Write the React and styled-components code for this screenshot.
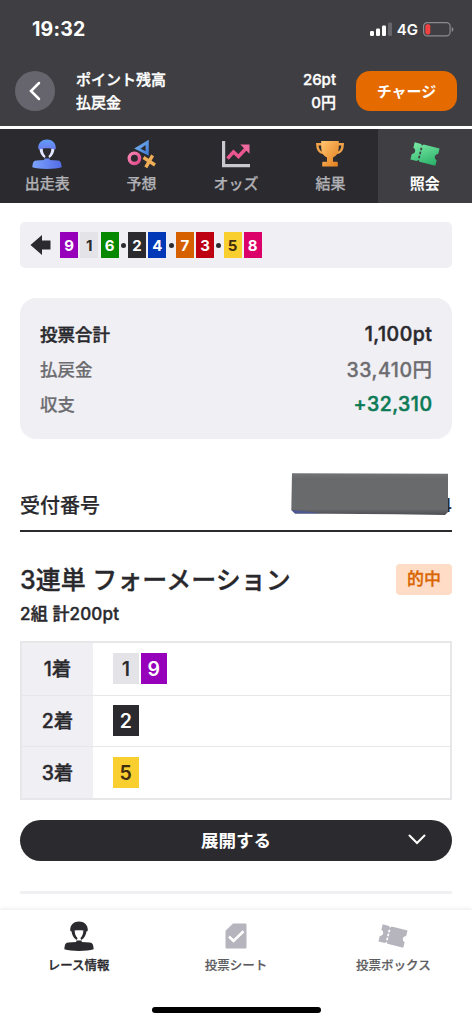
import React from "react";
import styled, { createGlobalStyle } from "styled-components";

const colors = {
  black: "#2b2b2f",
  header: "#3f3f43",
  gray: "#f0eff4",
  border: "#e7e7ea",
  text: "#29292d",
  subText: "#6c6c70",
  orange: "#e56a00",
  green: "#0b7a55",
};

const carColors = {
  1: { bg: "#e4e4e8", fg: "#2b2b2f" },
  2: { bg: "#2b2b2f", fg: "#ffffff" },
  3: { bg: "#bd0012", fg: "#ffffff" },
  4: { bg: "#0038b8", fg: "#ffffff" },
  5: { bg: "#f9cf2f", fg: "#3f2d10" },
  6: { bg: "#068800", fg: "#ffffff" },
  7: { bg: "#d66000", fg: "#ffffff" },
  8: { bg: "#dc0069", fg: "#ffffff" },
  9: { bg: "#9700bb", fg: "#ffffff" },
};

const lineup = [9, 1, 6, "dot", 2, 4, "dot", 7, 3, "dot", 5, 8];

const bets = [
  { label: "1着", cars: [1, 9] },
  { label: "2着", cars: [2] },
  { label: "3着", cars: [5] },
];

const Rider = ({ fill }) => (
  <svg width="30" height="30" viewBox="0 0 30 30">
    <defs>
      <linearGradient id="riderBlue" x1="0" y1="0" x2="0" y2="1">
        <stop offset="0" stopColor="#5f9cf5" />
        <stop offset="1" stopColor="#6c7df0" />
      </linearGradient>
      <linearGradient id="riderBody" x1="0" y1="0" x2="1" y2="0">
        <stop offset="0" stopColor="#7ba4ff" />
        <stop offset="1" stopColor="#536be5" />
      </linearGradient>
    </defs>
    <path
      d="M7.500 9.500h3.200c0 3.200.9 5.700 2.900 7.700l-1 1.800C9.400 17 7.700 13.600 7.500 9.500ZM22.500 9.500h-3.200c0 3.200-.9 5.700-2.900 7.700l1 1.800c3.200-2 4.900-5.400 5.100-9.500Z"
      fill={fill || "#e3e7ff"}
    />
    <path
      d="M6.200 8.800C6.200 3.600 10 .5 15 .5s8.800 3.100 8.800 8.300c0 1.200-.5 1.700-1.200 1.700-2.200-.9-4.600-1.200-7.600-1.200s-5.400.3-7.600 1.200c-.7 0-1.200-.5-1.200-1.700Z"
      fill={fill || "url(#riderBlue)"}
    />
    <path
      d="M12.300 19.400h5.400v1.500l7.800.7c2.300.2 3.500 1.400 3.800 3.600l.4 3c-3.700 1.200-8.700 1.700-14.700 1.700S4 29.400.3 28.200l.4-3c.3-2.200 1.500-3.400 3.800-3.600l7.800-.7Z"
      fill={fill || "url(#riderBody)"}
    />
  </svg>
);

const Forecast = () => (
  <svg width="30" height="30" viewBox="0 0 30 30">
    <defs>
      <linearGradient id="fcRing" x1="0" y1="0" x2="1" y2="1">
        <stop offset="0" stopColor="#f788b5" />
        <stop offset="1" stopColor="#e4478a" />
      </linearGradient>
      <linearGradient id="fcTri" x1="0" y1="0" x2="1" y2="1">
        <stop offset="0" stopColor="#83bdf8" />
        <stop offset="1" stopColor="#3a75d0" />
      </linearGradient>
    </defs>
    <path
      d="M21.800.8v16L7.200 9.600ZM18.600 6l-5 3.800 5 2.500Z"
      fill="url(#fcTri)"
      fillRule="evenodd"
    />
    <circle cx="7.400" cy="19.300" r="5.200" fill="none" stroke="url(#fcRing)" strokeWidth="3.400" />
    <path d="m16.500 18.500 11.500 7.500M25.600 16.300l-6.800 12" fill="none" stroke="#f0ae57" strokeWidth="3.400" />
  </svg>
);

const Odds = () => (
  <svg width="30" height="30" viewBox="0 0 30 30">
    <path d="M2.600 2v24.700H29" fill="none" stroke="#c9c9cf" strokeWidth="3.200" />
    <path
      d="m6.500 19.500 6-6.500 5 4.500 7.500-8"
      fill="none"
      stroke="#ea568f"
      strokeWidth="3.400"
    />
    <path d="M19.300 5.500h9.200v9.200Z" fill="#ee6a9f" />
  </svg>
);

const Trophy = () => (
  <svg width="30" height="30" viewBox="0 0 30 30">
    <defs>
      <linearGradient id="cup" x1="0" y1="0" x2="1" y2="1">
        <stop offset="0" stopColor="#ffc670" />
        <stop offset="1" stopColor="#e37c1c" />
      </linearGradient>
    </defs>
    <path
      d="M7 5.200H2.300c0 5.300 2.200 8.300 6.200 8.800M23 5.200h4.700c0 5.300-2.200 8.300-6.200 8.800"
      fill="none"
      stroke="#f3a349"
      strokeWidth="2.400"
    />
    <path
      d="M6.200 2h17.600v5.500c0 6-2.300 9.500-5.800 11v4.200h3.600c.7 0 1.200.5 1.200 1.200v3.600H7.200v-3.600c0-.7.5-1.200 1.200-1.200H12v-4.200c-3.500-1.500-5.800-5-5.800-11Z"
      fill="url(#cup)"
    />
  </svg>
);

const Ticket = ({ fill, slit }) => (
  <svg width="30" height="30" viewBox="0 0 30 30">
    <defs>
      <linearGradient id="ticketGreen" x1="0" y1="0" x2="1" y2="1">
        <stop offset="0" stopColor="#7ceba5" />
        <stop offset="1" stopColor="#27ae68" />
      </linearGradient>
    </defs>
    <g transform="rotate(14 15 15)">
      <path
        d="M2.200 6.200h6.600l1.300 1.600 1.300-1.600h16.400v5.600c-1.700.5-2.600 1.700-2.600 3.200s.9 2.700 2.600 3.200v5.600H11.400l-1.300-1.600-1.300 1.600H2.200v-5.600c1.700-.5 2.600-1.700 2.600-3.200s-.9-2.700-2.600-3.200Z"
        fill={fill || "url(#ticketGreen)"}
      />
      <path d="M10.100 9.700v10.900" stroke={slit} strokeWidth="1.700" strokeDasharray="2.700 1.400" />
    </g>
  </svg>
);

const Sheet = () => (
  <svg width="30" height="30" viewBox="0 0 30 30">
    <path
      d="M12 2.500h12.500c.6 0 1 .4 1 1v23c0 .6-.4 1-1 1h-19c-.6 0-1-.4-1-1V9.800Z"
      fill="#b6b5be"
    />
    <path d="m8 15.500 4.500 4.500 10-9.800" fill="none" stroke="#fff" strokeWidth="2.600" />
  </svg>
);

const tabs = [
  { label: "出走表", icon: <Rider /> },
  { label: "予想", icon: <Forecast /> },
  { label: "オッズ", icon: <Odds /> },
  { label: "結果", icon: <Trophy /> },
  { label: "照会", icon: <Ticket slit={colors.header} />, active: true },
];

const navs = [
  { label: "レース情報", icon: <Rider fill={colors.black} />, active: true },
  { label: "投票シート", icon: <Sheet /> },
  { label: "投票ボックス", icon: <Ticket fill="#b6b5be" slit="#fff" /> },
];

const Car = ({ number, large }) => (
  <StyledCar $large={large} $bg={carColors[number].bg} $fg={carColors[number].fg}>
    {number}
  </StyledCar>
);

const Header = () => (
  <StyledHeader>
    <StyledStatus>
      <StyledTime>19:32</StyledTime>
      <StyledSignals>
        <svg width="22" height="14" viewBox="0 0 22 14">
          <rect x="0" y="9" width="4" height="5" rx="1.200" fill="#fff" />
          <rect x="6" y="6.500" width="4" height="7.500" rx="1.200" fill="#fff" />
          <rect x="12" y="3.500" width="4" height="10.500" rx="1.200" fill="#fff" />
          <rect x="18" y="0.500" width="4" height="13.500" rx="1.200" fill="#67676b" />
        </svg>
        <span>4G</span>
        <svg width="31" height="15" viewBox="0 0 31 15">
          <rect x=".6" y=".6" width="26.500" height="13.300" rx="3.600" fill="none" stroke="#8b8b8f" strokeWidth="1.200" />
          <rect x="2.300" y="2.200" width="5" height="10.200" rx="1.800" fill="#f04040" />
          <path d="M28.700 5v4.800c1-.4 1.700-1.300 1.700-2.400S29.700 5.400 28.700 5Z" fill="#8b8b8f" />
        </svg>
      </StyledSignals>
    </StyledStatus>
    <StyledAccount>
      <StyledBack>
        <svg width="12" height="20" viewBox="0 0 12 20">
          <path d="m10 2-8 8 8 8" fill="none" stroke="#fff" strokeWidth="2.500" strokeLinecap="round" />
        </svg>
      </StyledBack>
      <StyledBalance>
        <div>
          <span>ポイント残高</span>
          <span>26pt</span>
        </div>
        <div>
          <span>払戻金</span>
          <span>0円</span>
        </div>
      </StyledBalance>
      <StyledCharge>チャージ</StyledCharge>
    </StyledAccount>
  </StyledHeader>
);

const App = () => {
  return (
    <StyledRoot>
      <GlobalStyle />
      <Header />
      <StyledTabs>
        {tabs.map((tab) => (
          <StyledTab key={tab.label} $active={tab.active}>
            {tab.icon}
            <span>{tab.label}</span>
          </StyledTab>
        ))}
      </StyledTabs>
      <StyledContents>
        <StyledLineup>
          <svg width="21" height="20" viewBox="0 0 21 20">
            <path d="M.5 10 12 0v5.500h8.500v9H12V20Z" fill={colors.black} />
          </svg>
          <StyledCars>
            {lineup.map((item, i) =>
              item === "dot" ? <StyledDot key={i} /> : <Car key={i} number={item} />
            )}
          </StyledCars>
        </StyledLineup>
        <StyledSummary>
          <StyledTotal $color={colors.text} $bold>
            <span>投票合計</span>
            <span>1,100pt</span>
          </StyledTotal>
          <StyledTotal>
            <span>払戻金</span>
            <span>33,410円</span>
          </StyledTotal>
          <StyledTotal $amount={colors.green}>
            <span>収支</span>
            <span>+32,310</span>
          </StyledTotal>
        </StyledSummary>
        <StyledReceipt>
          <span>受付番号</span>
          <StyledReceiptNumber>
            4
            <StyledMask width="158" height="43" viewBox="0 0 158 43">
              <defs>
                <linearGradient id="mask" x1="0" y1="0" x2="0" y2="1">
                  <stop offset="0" stopColor="#727375" />
                  <stop offset=".15" stopColor="#68696b" />
                  <stop offset=".85" stopColor="#6a6b6d" />
                  <stop offset="1" stopColor="#4d4e54" />
                </linearGradient>
              </defs>
              <path d="M1 .3 157 .8V39l-3 3-48-.8L4 40.500.300 37Z" fill="url(#mask)" />
              <path d="m.5 37 16 1.500 14 1.800-26.500.2Z" fill="#4c5793" />
            </StyledMask>
          </StyledReceiptNumber>
        </StyledReceipt>
        <StyledBetHead>
          <h1>3連単 フォーメーション</h1>
          <StyledHit>的中</StyledHit>
        </StyledBetHead>
        <StyledBetInfo>2組 計200pt</StyledBetInfo>
        <StyledTable>
          {bets.map((bet) => (
            <StyledRow key={bet.label}>
              <StyledPlace>{bet.label}</StyledPlace>
              <StyledPicks>
                {bet.cars.map((number) => (
                  <Car key={number} number={number} large />
                ))}
              </StyledPicks>
            </StyledRow>
          ))}
        </StyledTable>
        <StyledExpand>
          <span>展開する</span>
          <svg width="18" height="11" viewBox="0 0 18 11">
            <path d="m1.500 1.500 7.500 7.500 7.500-7.500" fill="none" stroke="#fff" strokeWidth="2" strokeLinecap="round" />
          </svg>
        </StyledExpand>
        <StyledDivider />
      </StyledContents>
      <StyledNav>
        <StyledNavList>
          {navs.map((nav) => (
            <StyledNavItem key={nav.label} $active={nav.active}>
              {nav.icon}
              <span>{nav.label}</span>
            </StyledNavItem>
          ))}
        </StyledNavList>
        <StyledHomeBar />
      </StyledNav>
    </StyledRoot>
  );
};

export default App;

const GlobalStyle = createGlobalStyle`
  * {
    box-sizing: border-box;
  }
  body {
    margin: 0;
    background-color: #fff;
    font-family: Inter, "Noto Sans CJK JP", sans-serif;
    color: ${colors.text};
  }
  svg {
    display: block;
    flex-shrink: 0;
  }
  button {
    border: 0;
    padding: 0;
    font-family: inherit;
  }
`;

const StyledRoot = styled.div`
  width: 472px;
  height: 1024px;
  display: flex;
  flex-direction: column;
  overflow: hidden;
  white-space: nowrap;
`;

const StyledHeader = styled.header`
  height: 129px;
  flex-shrink: 0;
  background-color: ${colors.header};
  border-bottom: 3px solid #fff;
  color: #fff;
`;

const StyledStatus = styled.div`
  height: 58px;
  padding: 0 18px 0 32px;
  display: flex;
  align-items: center;
  justify-content: space-between;
`;

const StyledTime = styled.span`
  font-size: 19.500px;
  font-weight: 700;
  letter-spacing: 0.2px;
`;

const StyledSignals = styled.div`
  display: flex;
  align-items: center;
  gap: 5px;
  font-size: 15px;
  font-weight: 600;
`;

const StyledAccount = styled.div`
  height: 66px;
  padding: 0 15px;
  display: flex;
  align-items: center;
`;

const StyledBack = styled.button`
  width: 40px;
  height: 40px;
  padding-right: 1px;
  display: flex;
  align-items: center;
  justify-content: center;
  border-radius: 50%;
  background-color: #66656e;
`;

const StyledBalance = styled.div`
  flex: 1;
  margin: 0 20px 0 21px;
  font-size: 15px;
  font-weight: 500;
  -webkit-text-stroke: 0.35px;
  & > div {
    height: 23px;
    line-height: 23px;
    display: flex;
    justify-content: space-between;
  }
`;

const StyledCharge = styled.button`
  width: 101px;
  height: 40px;
  padding-bottom: 1px;
  border-radius: 14px;
  background-color: ${colors.orange};
  color: #fff;
  font-size: 15px;
  font-weight: 700;
`;

const StyledTabs = styled.nav`
  height: 74px;
  flex-shrink: 0;
  display: grid;
  grid-template-columns: repeat(5, 1fr);
  background-color: ${colors.black};
`;

const StyledTab = styled.div`
  padding-top: 10px;
  display: flex;
  flex-direction: column;
  align-items: center;
  background-color: ${({ $active }) => ($active ? colors.header : "transparent")};
  color: ${({ $active }) => ($active ? "#fff" : "#b0b0b5")};
  font-size: 15px;
  font-weight: ${({ $active }) => ($active ? 700 : 500)};
  -webkit-text-stroke: ${({ $active }) => ($active ? 0 : "0.25px")};
  & > span {
    margin-top: 4px;
    line-height: 22px;
  }
`;

const StyledContents = styled.main`
  flex: 1;
  padding: 19px 20px 0;
`;

const StyledLineup = styled.div`
  height: 46px;
  padding-left: 10px;
  display: flex;
  align-items: center;
  gap: 9px;
  border-radius: 5px;
  background-color: ${colors.gray};
`;

const StyledCars = styled.div`
  display: flex;
  align-items: center;
  gap: 2.250px;
`;

const StyledCar = styled.span`
  width: ${({ $large }) => ($large ? 25.5 : 18)}px;
  height: ${({ $large }) => ($large ? 31 : 26)}px;
  display: flex;
  align-items: center;
  justify-content: center;
  background-color: ${({ $bg }) => $bg};
  color: ${({ $fg }) => $fg};
  font-size: ${({ $large }) => ($large ? 19.5 : 15)}px;
  font-weight: ${({ $large }) => ($large ? 600 : 700)};
`;

const StyledDot = styled.i`
  width: 5px;
  height: 5px;
  border-radius: 50%;
  background-color: ${colors.black};
`;

const StyledSummary = styled.section`
  height: 141px;
  margin-top: 30px;
  padding: 18px 20px;
  border-radius: 16px;
  background-color: ${colors.gray};
`;

const StyledTotal = styled.div`
  height: 35px;
  display: flex;
  align-items: center;
  justify-content: space-between;
  color: ${({ $color }) => $color || colors.subText};
  font-size: 17.500px;
  font-weight: 500;
  -webkit-text-stroke: ${({ $bold }) => ($bold ? "0.4px" : "0.2px")};
  & > span:nth-child(2) {
    margin-right: -0.5px;
    color: ${({ $amount }) => $amount};
    font-size: 19.500px;
    letter-spacing: 0.5px;
    -webkit-text-stroke: ${({ $bold, $amount }) => ($bold || $amount ? "0.5px" : "0.3px")};
  }
`;

const StyledReceipt = styled.div`
  height: 93px;
  padding-top: 52px;
  display: flex;
  justify-content: space-between;
  border-bottom: 2px solid ${colors.black};
  font-size: 20px;
  font-weight: 500;
  line-height: 30px;
  -webkit-text-stroke: 0.2px;
`;

const StyledReceiptNumber = styled.span`
  position: relative;
  font-size: 18px;
`;

const StyledMask = styled.svg`
  position: absolute;
  right: 3px;
  top: -18px;
`;

const StyledBetHead = styled.div`
  height: 64px;
  padding-top: 30px;
  display: flex;
  align-items: center;
  justify-content: space-between;
  & > h1 {
    margin: 0;
    padding-top: 2px;
    font-size: 25px;
    font-weight: 500;
    line-height: 34px;
    -webkit-text-stroke: 0.35px;
  }
`;

const StyledHit = styled.span`
  width: 56px;
  height: 31px;
  line-height: 31px;
  border-radius: 4px;
  background-color: #ffdcc6;
  color: #d96500;
  font-size: 17px;
  font-weight: 500;
  text-align: center;
  -webkit-text-stroke: 0.3px;
`;

const StyledBetInfo = styled.div`
  height: 45px;
  padding-top: 5px;
  font-size: 17px;
  font-weight: 500;
  line-height: 26px;
  letter-spacing: 0.15px;
  -webkit-text-stroke: 0.4px;
`;

const StyledTable = styled.div`
  height: 159px;
  display: grid;
  grid-template-rows: repeat(3, 1fr);
  border: 2.500px solid ${colors.border};
`;

const StyledRow = styled.div`
  display: flex;
  & + & {
    border-top: 1px solid ${colors.border};
  }
`;

const StyledPlace = styled.div`
  width: 71px;
  padding-bottom: 2px;
  display: flex;
  align-items: center;
  justify-content: center;
  background-color: ${colors.gray};
  font-size: 19.500px;
  font-weight: 500;
  -webkit-text-stroke: 0.35px;
`;

const StyledPicks = styled.div`
  padding-left: 20px;
  display: flex;
  align-items: center;
  gap: 2.500px;
`;

const StyledExpand = styled.button`
  width: 100%;
  height: 41px;
  margin-top: 20px;
  padding: 0 26px 2px;
  display: grid;
  grid-template-columns: 18px 1fr 18px;
  align-items: center;
  border-radius: 21px;
  background-color: ${colors.black};
  color: #fff;
  font-size: 17.500px;
  font-weight: 600;
  & > span {
    grid-column: 2;
  }
`;

const StyledDivider = styled.hr`
  height: 3px;
  margin: 30px 0 0;
  border: 0;
  background-color: #f0f0f2;
`;

const StyledNav = styled.footer`
  height: 114px;
  flex-shrink: 0;
  display: flex;
  flex-direction: column;
  align-items: center;
  background-color: #fff;
  box-shadow: 0 -2px 3px rgba(0, 0, 0, 0.06);
`;

const StyledNavList = styled.div`
  width: 100%;
  height: 97px;
  display: grid;
  grid-template-columns: repeat(3, 1fr);
`;

const StyledNavItem = styled.div`
  padding-top: 11px;
  display: flex;
  flex-direction: column;
  align-items: center;
  color: ${({ $active }) => ($active ? colors.text : "#5c5c60")};
  font-size: 12.500px;
  font-weight: 500;
  -webkit-text-stroke: ${({ $active }) => ($active ? "0.3px" : "0.2px")};
  & > span {
    margin-top: 5px;
    line-height: 20px;
  }
`;

const StyledHomeBar = styled.div`
  width: 169px;
  height: 6px;
  border-radius: 3px;
  background-color: #000;
`;
